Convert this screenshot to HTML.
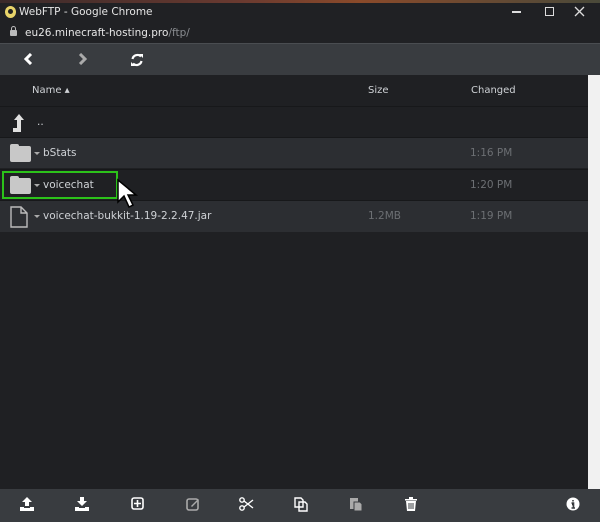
<!DOCTYPE html><html><head><style>
*{margin:0;padding:0;box-sizing:border-box}
body{width:600px;height:522px;overflow:hidden;background:#1f2023;font-family:"DejaVu Sans","Liberation Sans",sans-serif;position:relative;color:#ddd}
.a{position:absolute}
.row{position:absolute;left:0;width:588px;height:31px;border-top:1px solid #17181a}
.t{font-size:10.5px;color:#cfd2d6;position:absolute;top:9px}
.g{color:#6c6f73}
.fold{position:absolute;left:10px;top:8px;width:21px;height:16px;background:#c8c8c8;border-radius:2px}
.fold:before{content:"";position:absolute;left:0;top:-2px;width:9px;height:4px;background:#c8c8c8;border-radius:2px 2px 0 0}
.car{position:absolute;left:34px;top:14px;border:3px solid transparent;border-top:3px solid #aaa}
svg.i{position:absolute;top:497px}
</style></head><body>
<div class="a" style="left:0;top:0;width:600px;height:3px;background:linear-gradient(90deg,#3a2a2a,#6a3a30 40%,#8a4a2a 60%,#4a4a3a)"></div>
<div class="a" style="left:0;top:3px;width:600px;height:40px;background:#202124"></div>
<div class="a" style="left:5px;top:6px;width:11px;height:12px;border-radius:50%;background:#e8d46a"></div>
<div class="a" style="left:8px;top:9px;width:5px;height:5px;border-radius:50%;background:#222"></div>
<div class="a" style="left:19px;top:6px;font-size:10.5px;color:#e6e6e6">WebFTP - Google Chrome</div>
<div class="a" style="left:512px;top:11px;width:9px;height:1.5px;background:#ddd"></div>
<div class="a" style="left:545px;top:7px;width:9px;height:9px;border:1.5px solid #ddd"></div>
<svg class="a" style="left:574px;top:6px" width="11" height="11"><path d="M1 1L10 10M10 1L1 10" stroke="#ddd" stroke-width="1.3"/></svg>
<div class="a" style="left:10px;top:30px;width:7px;height:6px;background:#bbb;border-radius:1px"></div>
<div class="a" style="left:11px;top:26px;width:5px;height:6px;border:1.5px solid #bbb;border-radius:3px 3px 0 0"></div>
<div class="a" style="left:25px;top:27px;font-size:10.5px;color:#e6e6e6">eu26.minecraft-hosting.pro<span style="color:#8a8d91">/ftp/</span></div>
<div class="a" style="left:0;top:43px;width:600px;height:32px;background:#393c40;border-top:1px solid #4a4d51"></div>
<svg class="a" style="left:24px;top:53px" width="10" height="12"><path d="M7 1L2 6L7 11" stroke="#fff" stroke-width="3" fill="none"/></svg>
<svg class="a" style="left:77px;top:53px" width="10" height="12"><path d="M3 1L8 6L3 11" stroke="#aaa" stroke-width="3" fill="none"/></svg>
<svg class="a" style="left:130px;top:53px" width="14" height="14"><path d="M2.5 6A5 5 0 0 1 11 3.5M11.5 8A5 5 0 0 1 3 10.5" stroke="#fff" stroke-width="2.2" fill="none"/><path d="M9 1L13 1L13 5Z M1 9L5 13L1 13Z" fill="#fff"/></svg>
<div class="a" style="left:0;top:75px;width:588px;height:31px;background:#1f2023"></div>
<div class="a" style="left:32px;top:85px;font-size:10px;color:#cfd2d6">Name ▴</div>
<div class="a" style="left:368px;top:85px;font-size:10px;color:#cfd2d6">Size</div>
<div class="a" style="left:471px;top:85px;font-size:10px;color:#cfd2d6">Changed</div>
<div class="row" style="top:106px;background:#1f2023"><svg class="a" style="left:12px;top:6px" width="14" height="20"><path d="M7 1L2 7H5V15H1V19H9V7H12Z" fill="#e0e0e0"/></svg><div class="t" style="left:37px">..</div></div>
<div class="row" style="top:137px;background:#2c2e32"><div class="fold"></div><div class="car"></div><div class="t" style="left:43px">bStats</div><div class="t g" style="left:470px">1:16 PM</div></div>
<div class="row" style="top:169px;background:#1f2023"><div class="fold"></div><div class="car"></div><div class="t" style="left:43px">voicechat</div><div class="t g" style="left:470px">1:20 PM</div></div>
<div class="row" style="top:200px;background:#2c2e32;height:32px"><svg class="a" style="left:10px;top:5px" width="18" height="22"><path d="M1 1H11L17 7V21H1Z M11 1V7H17" stroke="#bbb" stroke-width="1.4" fill="none"/></svg><div class="car"></div><div class="t" style="left:43px">voicechat-bukkit-1.19-2.2.47.jar</div><div class="t g" style="left:368px">1.2MB</div><div class="t g" style="left:470px">1:19 PM</div></div>
<div class="a" style="left:2px;top:171px;width:116px;height:28px;border:2px solid #2cc21a"></div>
<svg class="a" style="left:116px;top:178px" width="26" height="32" viewBox="0 0 26 32"><path d="M2 2 L2 24 L8 18 L13 29 L17 27 L12 17 L20 17 Z" fill="#fff" stroke="#000" stroke-width="1.5"/></svg>
<div class="a" style="left:588px;top:75px;width:12px;height:414px;background:#f1f1f1"></div>
<div class="a" style="left:0;top:489px;width:600px;height:33px;background:#393c40"></div>
<svg class="i" style="left:20px" width="14" height="14"><path d="M7 0L2 5H5V9H9V5H12Z M0 10H4V11H10V10H14V14H0Z" fill="#fff"/></svg>
<svg class="i" style="left:75px" width="14" height="14"><path d="M5 0H9V4H12L7 9L2 4H5Z M0 10H4V11H10V10H14V14H0Z" fill="#fff"/></svg>
<svg class="i" style="left:131px" width="13" height="13"><rect x="1" y="1" width="11" height="11" rx="2" stroke="#fff" stroke-width="1.6" fill="none"/><path d="M6.5 3V10M3 6.5H10" stroke="#fff" stroke-width="1.6"/></svg>
<svg class="i" style="left:186px" width="14" height="14"><rect x="1" y="2" width="11" height="11" rx="2" stroke="#aaa" stroke-width="1.6" fill="none"/><path d="M5 9L12 2L13 3L6 10Z" fill="#aaa"/></svg>
<svg class="i" style="left:239px" width="15" height="14"><circle cx="3" cy="3" r="2.2" stroke="#fff" stroke-width="1.4" fill="none"/><circle cx="3" cy="11" r="2.2" stroke="#fff" stroke-width="1.4" fill="none"/><path d="M5 4L14 11M5 10L14 3" stroke="#fff" stroke-width="1.4"/></svg>
<svg class="i" style="left:294px" width="15" height="15"><path d="M1 1H7L9 3V10H1Z M5 5H11L13 7V14H5Z" stroke="#fff" stroke-width="1.4" fill="#393c40"/></svg>
<svg class="i" style="left:349px" width="15" height="15"><path d="M1 1H9V12H1Z" fill="#aaa"/><path d="M5 5H11L13 7V14H5Z" fill="#aaa" stroke="#393c40" stroke-width="1"/></svg>
<svg class="i" style="left:405px" width="12" height="14"><path d="M0 2H12V3.5H0Z M4 0H8V2H4Z M1 4H11L10 14H2Z" fill="#fff"/><path d="M4 6V12M6 6V12M8 6V12" stroke="#393c40"/></svg>
<svg class="i" style="left:566px" width="14" height="14"><circle cx="7" cy="7" r="6.5" fill="#fff"/><path d="M7 3V4.5M5.5 6H7.5V11M5.5 11H9" stroke="#393c40" stroke-width="1.6"/></svg>
</body></html>
